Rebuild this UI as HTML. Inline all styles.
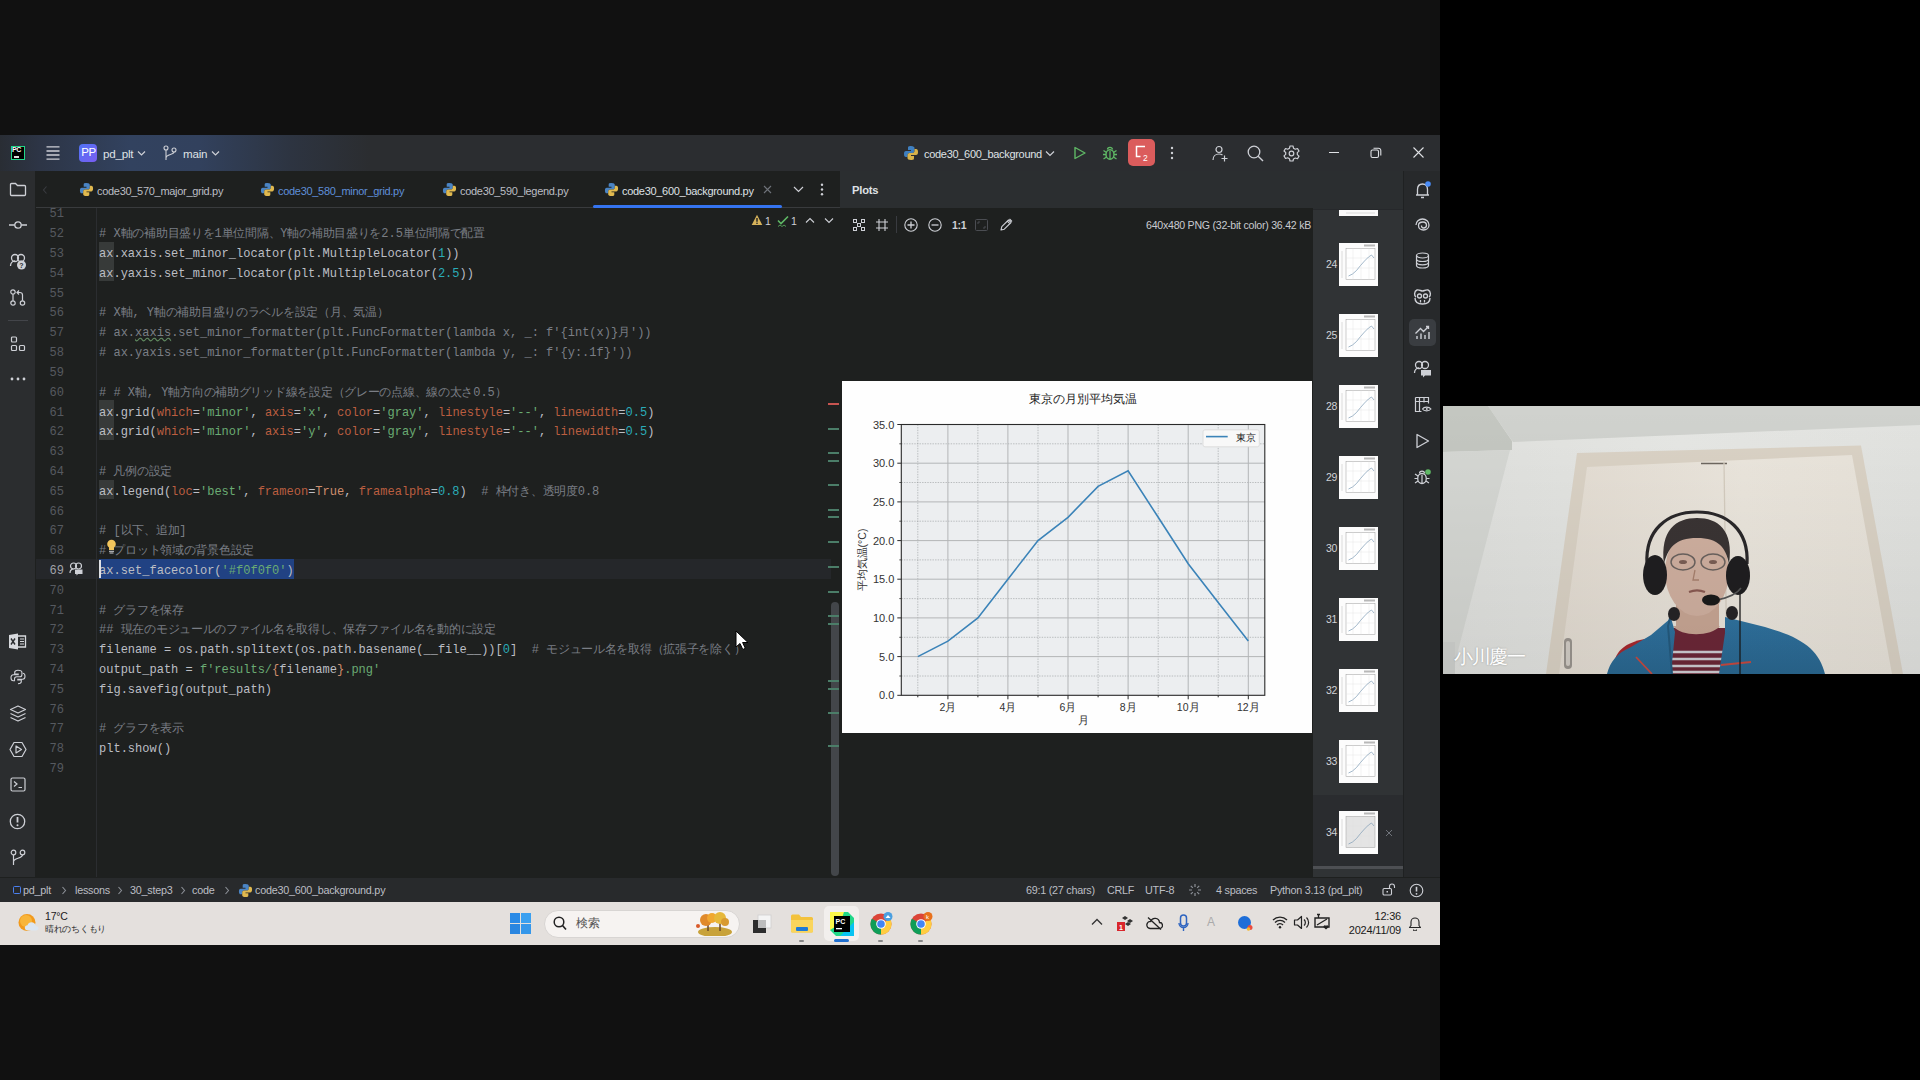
<!DOCTYPE html>
<html><head><meta charset="utf-8">
<style>
*{margin:0;padding:0;box-sizing:border-box}
html,body{width:1920px;height:1080px;overflow:hidden;background:#000;font-family:"Liberation Sans",sans-serif}
.a{position:absolute}
#top{left:0;top:0;width:1440px;height:135px;background:#111}
#bot{left:0;top:945px;width:1440px;height:135px;background:#111}
#title{left:0;top:135px;width:1440px;height:36px;background:linear-gradient(90deg,#292d34 0px,#2d3546 40px,#32425f 130px,#32415d 200px,#2d3441 290px,#2b2d30 370px,#2b2d30 100%)}
#lstrip{left:0;top:171px;width:36px;height:706px;background:#2b2d2f;border-right:1px solid #1e201f}
#tabs{left:36px;top:171px;width:804px;height:37px;background:#1e201f;border-bottom:1px solid #393b3d}
#editor{left:36px;top:208px;width:804px;height:669px;background:#1e201f;overflow:hidden}
#plotshdr{left:840px;top:171px;width:473px;height:37px;background:#2b2e30}
#plotsbody{left:840px;top:208px;width:473px;height:669px;background:#1e201f}
#thumbs{left:1313px;top:171px;width:90px;height:706px;background:#303335;overflow:hidden}
#rstrip{left:1403px;top:171px;width:37px;height:706px;background:#27292b;border-left:1px solid #1f2122}
#status{left:0;top:877px;width:1440px;height:25px;background:#282a2c;border-top:1px solid #1e201f}
#taskbar{left:0;top:902px;width:1440px;height:43px;background:#e4e0dd}
#cam{left:1443px;top:406px;width:477px;height:268px;background:#c9cbc6;overflow:hidden}
.ln{position:absolute;left:0;width:28px;text-align:right;font-family:"Liberation Mono",monospace;font-size:12.03px;line-height:19.81px;color:#565a60}
.cl{position:absolute;left:63px;white-space:pre;font-family:"Liberation Mono",monospace;font-size:12.03px;line-height:19.81px;color:#bcbec4}
.j{font-size:12px;letter-spacing:-0.28px}
.axh{background:#373a39}
.sel{background:#214283;display:inline-block;height:19.81px;vertical-align:top}
.tt{top:13.5px;font-size:11px;letter-spacing:-0.3px}
.st{top:5.5px;font-size:10.8px;color:#bcbec4;letter-spacing:-0.25px}
.ui{font-family:"Liberation Sans",sans-serif;white-space:nowrap}
</style></head><body>
<div id="top" class="a"></div>
<div id="bot" class="a"></div>
<div id="title" class="a">
  <!-- PC logo -->
  <div class="a" style="left:11px;top:11px;width:14px;height:14px;background:#000;border:1px solid #21d789"></div>
  <div class="a ui" style="left:12px;top:11px;font-size:7px;font-weight:bold;color:#fff;letter-spacing:-0.5px">PC</div>
  <div class="a" style="left:14px;top:21px;width:5px;height:1.5px;background:#ddd"></div>
  <!-- hamburger -->
  <svg class="a" style="left:45px;top:10px" width="16" height="16" viewBox="0 0 16 16"><path d="M1.5 1.8h13M1.5 6h13M1.5 10h13M1.5 14.2h13" stroke="#ced0d6" stroke-width="1.3"/></svg>
  <!-- PP badge -->
  <div class="a" style="left:79px;top:9px;width:18px;height:18px;border-radius:4px;background:linear-gradient(135deg,#4f73f5,#7a5df2)"></div>
  <div class="a ui" style="left:80px;top:11px;width:17px;text-align:center;font-size:11.5px;color:#fff;letter-spacing:-0.3px">PP</div>
  <div class="a ui" style="left:103px;top:12px;font-size:11.6px;letter-spacing:-0.2px;color:#dfe1e5">pd_plt</div>
  <svg class="a" style="left:137px;top:15px" width="9" height="7" viewBox="0 0 9 7"><path d="M1 1.5l3.5 3.5 3.5-3.5" stroke="#ced0d6" stroke-width="1.2" fill="none"/></svg>
  <!-- branch -->
  <svg class="a" style="left:163px;top:10px" width="14" height="16" viewBox="0 0 14 16"><circle cx="3" cy="3" r="2" stroke="#ced0d6" stroke-width="1.1" fill="none"/><circle cx="11" cy="5" r="2" stroke="#ced0d6" stroke-width="1.1" fill="none"/><path d="M3 5v10M11 7c0 3-8 2-8 6" stroke="#ced0d6" stroke-width="1.1" fill="none"/></svg>
  <div class="a ui" style="left:183px;top:12px;font-size:11.6px;letter-spacing:-0.2px;color:#dfe1e5">main</div>
  <svg class="a" style="left:211px;top:15px" width="9" height="7" viewBox="0 0 9 7"><path d="M1 1.5l3.5 3.5 3.5-3.5" stroke="#ced0d6" stroke-width="1.2" fill="none"/></svg>
  <!-- run config -->
  <svg class="a" style="left:903px;top:10px" width="16" height="16" viewBox="0 0 16 16"><path d="M8 1c-3 0-3 1-3 2v2h3v1H3c-1.5 0-2 1-2 3s.5 3 2 3h1.5V10c0-1 1-2 2-2h3c1 0 2-1 2-2V3c0-1-1-2-3.5-2z" fill="#3f7fbf"/><path d="M8 15c3 0 3-1 3-2v-2H8v-1h5c1.5 0 2-1 2-3s-.5-3-2-3h-1.5V6c0 1-1 2-2 2h-3c-1 0-2 1-2 2v3c0 1 1 2 3.5 2z" fill="#d9b34a"/></svg>
  <div class="a ui" style="left:924px;top:13px;font-size:11px;letter-spacing:-0.3px;color:#dfe1e5">code30_600_background</div>
  <svg class="a" style="left:1045px;top:15px" width="10" height="7" viewBox="0 0 10 7"><path d="M1 1.5l4 4 4-4" stroke="#ced0d6" stroke-width="1.2" fill="none"/></svg>
  <svg class="a" style="left:1073px;top:11px" width="14" height="14" viewBox="0 0 14 14"><path d="M2 1.5v11l10-5.5z" stroke="#5fb865" stroke-width="1.4" fill="none" stroke-linejoin="round"/></svg>
  <svg class="a" style="left:1102px;top:10px" width="16" height="16" viewBox="0 0 16 16"><ellipse cx="8" cy="9.5" rx="4" ry="4.8" stroke="#5fb865" stroke-width="1.4" fill="none"/><path d="M5.5 4.5a2.5 2.2 0 015 0M1 9.5h3M12 9.5h3M1.5 5.5l3 2M14.5 5.5l-3 2M1.5 14l3-2M14.5 14l-3-2M8 6v8" stroke="#5fb865" stroke-width="1.3" fill="none"/></svg>
  <div class="a" style="left:1128px;top:4px;width:27px;height:27px;border-radius:5px;background:#db5c5c"></div>
  <svg class="a" style="left:1133px;top:9px" width="18" height="18" viewBox="0 0 18 18"><path d="M12 2.5H3.5v10h4" stroke="#fff" stroke-width="1.5" fill="none"/><text x="10" y="17" font-size="8.5" fill="#fff" font-family="Liberation Sans">2</text></svg>
  <svg class="a" style="left:1170px;top:11px" width="4" height="14" viewBox="0 0 4 14"><circle cx="2" cy="2" r="1.2" fill="#ced0d6"/><circle cx="2" cy="7" r="1.2" fill="#ced0d6"/><circle cx="2" cy="12" r="1.2" fill="#ced0d6"/></svg>
  <svg class="a" style="left:1212px;top:10px" width="17" height="17" viewBox="0 0 17 17"><circle cx="7" cy="4.5" r="3" stroke="#ced0d6" stroke-width="1.2" fill="none"/><path d="M1 15c0-3.5 2.5-6 6-6 1.5 0 2.5.3 3.5 1M12.5 10.5v6M9.5 13.5h6" stroke="#ced0d6" stroke-width="1.2" fill="none"/></svg>
  <svg class="a" style="left:1247px;top:10px" width="17" height="17" viewBox="0 0 17 17"><circle cx="7" cy="7" r="5.8" stroke="#ced0d6" stroke-width="1.3" fill="none"/><path d="M11.2 11.2l4.8 4.8" stroke="#ced0d6" stroke-width="1.4"/></svg>
  <svg class="a" style="left:1283px;top:10px" width="17" height="17" viewBox="0 0 17 17"><path d="M7 1h3l.5 2.2 1.8 1 2.2-.7 1.5 2.6-1.7 1.5v2l1.7 1.5-1.5 2.6-2.2-.7-1.8 1L10 16H7l-.5-2.2-1.8-1-2.2.7L1 10.9l1.7-1.5v-2L1 6.1l1.5-2.6 2.2.7 1.8-1z" stroke="#ced0d6" stroke-width="1.2" fill="none" stroke-linejoin="round"/><circle cx="8.5" cy="8.5" r="2.3" stroke="#ced0d6" stroke-width="1.2" fill="none"/></svg>
  <div class="a" style="left:1329px;top:17px;width:10px;height:1.2px;background:#dfe1e5"></div>
  <svg class="a" style="left:1370px;top:12px" width="12" height="12" viewBox="0 0 12 12"><rect x="1" y="3" width="7.5" height="7.5" rx="1.5" stroke="#dfe1e5" stroke-width="1.1" fill="none"/><path d="M3.5 1.2h5a2.3 2.3 0 012.3 2.3v5" stroke="#dfe1e5" stroke-width="1.1" fill="none"/></svg>
  <svg class="a" style="left:1413px;top:12px" width="11" height="11" viewBox="0 0 11 11"><path d="M.5.5l10 10M10.5.5l-10 10" stroke="#dfe1e5" stroke-width="1.1"/></svg>
</div>

<div id="lstrip" class="a">
  <svg class="a" style="left:9px;top:11px" width="18" height="15" viewBox="0 0 18 15"><path d="M1.5 2.5a1 1 0 011-1h4l2 2h7a1 1 0 011 1v8a1 1 0 01-1 1h-13a1 1 0 01-1-1z" stroke="#ced0d6" stroke-width="1.3" fill="none"/></svg>
  <svg class="a" style="left:8px;top:48px" width="20" height="12" viewBox="0 0 20 12"><circle cx="10" cy="6" r="3.2" stroke="#ced0d6" stroke-width="1.3" fill="none"/><path d="M1 6h5.8M13.2 6H19" stroke="#ced0d6" stroke-width="1.3"/></svg>
  <svg class="a" style="left:9px;top:82px" width="18" height="17" viewBox="0 0 18 17"><circle cx="6" cy="5" r="3.5" stroke="#ced0d6" stroke-width="1.3" fill="none"/><circle cx="12" cy="5" r="3.5" stroke="#ced0d6" stroke-width="1.3" fill="none"/><path d="M1.5 13c0-3 2-5 4.5-5" stroke="#ced0d6" stroke-width="1.3" fill="none"/><circle cx="12.5" cy="12" r="4.5" fill="#ced0d6"/><text x="10.3" y="15" font-size="7" font-weight="bold" fill="#2b2d30" font-family="Liberation Sans">?</text></svg>
  <svg class="a" style="left:9px;top:118px" width="18" height="17" viewBox="0 0 18 17"><circle cx="4" cy="3" r="2.2" stroke="#ced0d6" stroke-width="1.2" fill="none"/><circle cx="4" cy="14" r="2.2" stroke="#ced0d6" stroke-width="1.2" fill="none"/><circle cx="13.5" cy="14" r="2.2" stroke="#ced0d6" stroke-width="1.2" fill="none"/><path d="M4 5.2v6.6M13.5 11.8V6c0-1.5-1-2.5-2.5-2.5H8M10 1.5L8 3.5l2 2" stroke="#ced0d6" stroke-width="1.2" fill="none"/></svg>
  <div class="a" style="left:8px;top:149px;width:20px;height:1px;background:#43454a"></div>
  <svg class="a" style="left:10px;top:165px" width="16" height="16" viewBox="0 0 16 16"><rect x="1.5" y="1" width="5" height="5" rx="1" stroke="#ced0d6" stroke-width="1.2" fill="none"/><rect x="1.5" y="9.5" width="5" height="5" rx="1" stroke="#ced0d6" stroke-width="1.2" fill="none"/><rect x="9.5" y="9.5" width="5" height="5" rx="1" stroke="#ced0d6" stroke-width="1.2" fill="none"/></svg>
  <svg class="a" style="left:9px;top:205px" width="18" height="6" viewBox="0 0 18 6"><circle cx="3" cy="3" r="1.4" fill="#ced0d6"/><circle cx="9" cy="3" r="1.4" fill="#ced0d6"/><circle cx="15" cy="3" r="1.4" fill="#ced0d6"/></svg>

  <svg class="a" style="left:8px;top:462px" width="19" height="17" viewBox="0 0 19 17"><path d="M1 2l9-1.5v16L1 15z" fill="#d7d9dd"/><path d="M10 3h7.5v11H10" stroke="#d7d9dd" stroke-width="1.3" fill="none"/><path d="M12 6h4M12 8.5h4M12 11h4" stroke="#d7d9dd" stroke-width="1"/><path d="M3 5.5l4 6M7 5.5l-4 6" stroke="#2b2d30" stroke-width="1.4"/></svg>
  <svg class="a" style="left:10px;top:498px" width="16" height="16" viewBox="0 0 16 16"><path d="M8 1.2c-3 0-3.3 1.2-3.3 2.2V5h3.5v.8H3.3C1.8 5.8 1 7 1 8.8s.8 3 2.3 3h1.2v-1.8c0-1.2 1-2.2 2.2-2.2h3.2c1 0 2-1 2-2V3.4c0-1.1-1-2.2-3.9-2.2z" stroke="#ced0d6" stroke-width="1.1" fill="none"/><path d="M8 14.8c3 0 3.3-1.2 3.3-2.2V11H7.8v-.8h4.9c1.5 0 2.3-1.2 2.3-3s-.8-3-2.3-3" stroke="#ced0d6" stroke-width="1.1" fill="none"/></svg>
  <svg class="a" style="left:9px;top:534px" width="18" height="17" viewBox="0 0 18 17"><path d="M9 1L1.5 4.5 9 8l7.5-3.5z" stroke="#ced0d6" stroke-width="1.2" fill="none" stroke-linejoin="round"/><path d="M1.5 8.5L9 12l7.5-3.5M1.5 12.5L9 16l7.5-3.5" stroke="#ced0d6" stroke-width="1.2" fill="none" stroke-linejoin="round"/></svg>
  <svg class="a" style="left:9px;top:570px" width="18" height="17" viewBox="0 0 18 17"><path d="M5 1.5h8l4 7-4 7H5l-4-7z" stroke="#ced0d6" stroke-width="1.2" fill="none" stroke-linejoin="round"/><path d="M7 5v7l5.5-3.5z" stroke="#ced0d6" stroke-width="1.2" fill="none" stroke-linejoin="round"/></svg>
  <svg class="a" style="left:10px;top:606px" width="16" height="15" viewBox="0 0 16 15"><rect x="1" y="1" width="14" height="13" rx="1.5" stroke="#ced0d6" stroke-width="1.2" fill="none"/><path d="M4 4.5l3 2.5-3 2.5M8.5 10.5H12" stroke="#ced0d6" stroke-width="1.2" fill="none"/></svg>
  <svg class="a" style="left:9px;top:642px" width="17" height="17" viewBox="0 0 17 17"><circle cx="8.5" cy="8.5" r="7.2" stroke="#ced0d6" stroke-width="1.3" fill="none"/><path d="M8.5 4v5.5" stroke="#ced0d6" stroke-width="1.8"/><circle cx="8.5" cy="12.3" r="1" fill="#ced0d6"/></svg>
  <svg class="a" style="left:10px;top:678px" width="16" height="17" viewBox="0 0 16 17"><circle cx="3.5" cy="3.5" r="2.3" stroke="#ced0d6" stroke-width="1.2" fill="none"/><circle cx="12.5" cy="3.5" r="2.3" stroke="#ced0d6" stroke-width="1.2" fill="none"/><path d="M3.5 5.8V16M12.5 5.8c0 4-9 3-9 7" stroke="#ced0d6" stroke-width="1.2" fill="none"/></svg>
</div>

<div id="tabs" class="a">
  <svg class="a" style="left:6px;top:14px" width="6" height="10" viewBox="0 0 6 10"><path d="M4.5 1.5L1.5 5l3 3.5" stroke="#3a3c40" stroke-width="1.1" fill="none"/></svg>
  <svg class="a" style="left:43px;top:11px" width="15" height="15" viewBox="0 0 16 16"><path d="M8 1c-3 0-3 1-3 2v2h3v1H3c-1.5 0-2 1-2 3s.5 3 2 3h1.5V10c0-1 1-2 2-2h3c1 0 2-1 2-2V3c0-1-1-2-3.5-2z" fill="#4a84c4"/><path d="M8 15c3 0 3-1 3-2v-2H8v-1h5c1.5 0 2-1 2-3s-.5-3-2-3h-1.5V6c0 1-1 2-2 2h-3c-1 0-2 1-2 2v3c0 1 1 2 3.5 2z" fill="#e0b94f"/></svg><div class="a ui tt" style="left:61px;color:#bcbec4">code30_570_major_grid.py</div>
  <svg class="a" style="left:224px;top:11px" width="15" height="15" viewBox="0 0 16 16"><path d="M8 1c-3 0-3 1-3 2v2h3v1H3c-1.5 0-2 1-2 3s.5 3 2 3h1.5V10c0-1 1-2 2-2h3c1 0 2-1 2-2V3c0-1-1-2-3.5-2z" fill="#4a84c4"/><path d="M8 15c3 0 3-1 3-2v-2H8v-1h5c1.5 0 2-1 2-3s-.5-3-2-3h-1.5V6c0 1-1 2-2 2h-3c-1 0-2 1-2 2v3c0 1 1 2 3.5 2z" fill="#e0b94f"/></svg><div class="a ui tt" style="left:242px;color:#5e8fd9">code30_580_minor_grid.py</div>
  <svg class="a" style="left:406px;top:11px" width="15" height="15" viewBox="0 0 16 16"><path d="M8 1c-3 0-3 1-3 2v2h3v1H3c-1.5 0-2 1-2 3s.5 3 2 3h1.5V10c0-1 1-2 2-2h3c1 0 2-1 2-2V3c0-1-1-2-3.5-2z" fill="#4a84c4"/><path d="M8 15c3 0 3-1 3-2v-2H8v-1h5c1.5 0 2-1 2-3s-.5-3-2-3h-1.5V6c0 1-1 2-2 2h-3c-1 0-2 1-2 2v3c0 1 1 2 3.5 2z" fill="#e0b94f"/></svg><div class="a ui tt" style="left:424px;color:#bcbec4">code30_590_legend.py</div>
  <svg class="a" style="left:568px;top:11px" width="15" height="15" viewBox="0 0 16 16"><path d="M8 1c-3 0-3 1-3 2v2h3v1H3c-1.5 0-2 1-2 3s.5 3 2 3h1.5V10c0-1 1-2 2-2h3c1 0 2-1 2-2V3c0-1-1-2-3.5-2z" fill="#4a84c4"/><path d="M8 15c3 0 3-1 3-2v-2H8v-1h5c1.5 0 2-1 2-3s-.5-3-2-3h-1.5V6c0 1-1 2-2 2h-3c-1 0-2 1-2 2v3c0 1 1 2 3.5 2z" fill="#e0b94f"/></svg><div class="a ui tt" style="left:586px;color:#dfe1e5">code30_600_background.py</div>
  <svg class="a" style="left:727px;top:14px" width="9" height="9" viewBox="0 0 9 9"><path d="M1 1l7 7M8 1L1 8" stroke="#6f737a" stroke-width="1.1"/></svg>
  <div class="a" style="left:557px;top:34px;width:189px;height:3px;border-radius:2px;background:#3574f0"></div>
  <svg class="a" style="left:757px;top:15px" width="11" height="7" viewBox="0 0 11 7"><path d="M1 1l4.5 4.5L10 1" stroke="#ced0d6" stroke-width="1.2" fill="none"/></svg>
  <svg class="a" style="left:784px;top:12px" width="4" height="13" viewBox="0 0 4 13"><circle cx="2" cy="1.8" r="1.2" fill="#ced0d6"/><circle cx="2" cy="6.5" r="1.2" fill="#ced0d6"/><circle cx="2" cy="11.2" r="1.2" fill="#ced0d6"/></svg>
</div>

<div id="editor" class="a">
  <div class="a" style="left:0;top:351px;width:795px;height:20px;background:#25272a"></div>
  <div class="a" style="left:60px;top:0;width:1px;height:669px;background:#2b2d30"></div>
<div class="a" style="left:63px;top:271.54px;width:14.5px;height:19.81px;background:#373a39"></div>
<div class="a" style="left:63px;top:192.30px;width:14.5px;height:39.62px;background:#373a39"></div>
<div class="a" style="left:63px;top:33.82px;width:14.5px;height:39.62px;background:#373a39"></div>
<div class="a" style="left:63px;top:350.75px;width:194.9px;height:19.81px;background:#214283"></div>
<div class="ln" style="top:-2.60px">51</div><div class="cl" style="top:-2.60px"></div>
<div class="ln" style="top:17.21px">52</div><div class="cl" style="top:17.21px"><span style="color:#7a7e85"># X<span class="j">軸の補助目盛りを</span>1<span class="j">単位間隔、</span>Y<span class="j">軸の補助目盛りを</span>2.5<span class="j">単位間隔で配置</span></span></div>
<div class="ln" style="top:37.02px">53</div><div class="cl" style="top:37.02px">ax.xaxis.set_minor_locator(plt.MultipleLocator(<span style="color:#2aacb8">1</span>))</div>
<div class="ln" style="top:56.83px">54</div><div class="cl" style="top:56.83px">ax.yaxis.set_minor_locator(plt.MultipleLocator(<span style="color:#2aacb8">2.5</span>))</div>
<div class="ln" style="top:76.64px">55</div><div class="cl" style="top:76.64px"></div>
<div class="ln" style="top:96.45px">56</div><div class="cl" style="top:96.45px"><span style="color:#7a7e85"># X<span class="j">軸</span>, Y<span class="j">軸の補助目盛りのラベルを設定（月、気温）</span></span></div>
<div class="ln" style="top:116.26px">57</div><div class="cl" style="top:116.26px"><span style="color:#7a7e85"># ax.</span><span style="color:#7a7e85;text-decoration:underline wavy #5f8a5f">xaxis</span><span style="color:#7a7e85">.set_minor_formatter(plt.FuncFormatter(lambda x, _: f&#x27;{int(x)}<span class="j">月</span>&#x27;))</span></div>
<div class="ln" style="top:136.07px">58</div><div class="cl" style="top:136.07px"><span style="color:#7a7e85"># ax.yaxis.set_minor_formatter(plt.FuncFormatter(lambda y, _: f&#x27;{y:.1f}&#x27;))</span></div>
<div class="ln" style="top:155.88px">59</div><div class="cl" style="top:155.88px"></div>
<div class="ln" style="top:175.69px">60</div><div class="cl" style="top:175.69px"><span style="color:#7a7e85"># # X<span class="j">軸</span>, Y<span class="j">軸方向の補助グリッド線を設定（グレーの点線、線の太さ</span>0.5<span class="j">）</span></span></div>
<div class="ln" style="top:195.50px">61</div><div class="cl" style="top:195.50px">ax.grid(<span style="color:#bb5e40">which</span>=<span style="color:#6aab73">&#x27;minor&#x27;</span>, <span style="color:#bb5e40">axis</span>=<span style="color:#6aab73">&#x27;x&#x27;</span>, <span style="color:#bb5e40">color</span>=<span style="color:#6aab73">&#x27;gray&#x27;</span>, <span style="color:#bb5e40">linestyle</span>=<span style="color:#6aab73">&#x27;--&#x27;</span>, <span style="color:#bb5e40">linewidth</span>=<span style="color:#2aacb8">0.5</span>)</div>
<div class="ln" style="top:215.31px">62</div><div class="cl" style="top:215.31px">ax.grid(<span style="color:#bb5e40">which</span>=<span style="color:#6aab73">&#x27;minor&#x27;</span>, <span style="color:#bb5e40">axis</span>=<span style="color:#6aab73">&#x27;y&#x27;</span>, <span style="color:#bb5e40">color</span>=<span style="color:#6aab73">&#x27;gray&#x27;</span>, <span style="color:#bb5e40">linestyle</span>=<span style="color:#6aab73">&#x27;--&#x27;</span>, <span style="color:#bb5e40">linewidth</span>=<span style="color:#2aacb8">0.5</span>)</div>
<div class="ln" style="top:235.12px">63</div><div class="cl" style="top:235.12px"></div>
<div class="ln" style="top:254.93px">64</div><div class="cl" style="top:254.93px"><span style="color:#7a7e85"># <span class="j">凡例の設定</span></span></div>
<div class="ln" style="top:274.74px">65</div><div class="cl" style="top:274.74px">ax.legend(<span style="color:#bb5e40">loc</span>=<span style="color:#6aab73">&#x27;best&#x27;</span>, <span style="color:#bb5e40">frameon</span>=<span style="color:#cf8e6d">True</span>, <span style="color:#bb5e40">framealpha</span>=<span style="color:#2aacb8">0.8</span>)  <span style="color:#7a7e85"># <span class="j">枠付き、透明度</span>0.8</span></div>
<div class="ln" style="top:294.55px">66</div><div class="cl" style="top:294.55px"></div>
<div class="ln" style="top:314.36px">67</div><div class="cl" style="top:314.36px"><span style="color:#7a7e85"># [<span class="j">以下、追加</span>]</span></div>
<div class="ln" style="top:334.17px">68</div><div class="cl" style="top:334.17px"><span style="color:#7a7e85"># <span class="j">プロット領域の背景色設定</span></span></div>
<div class="ln" style="top:353.98px;color:#a1a3ab">69</div><div class="cl" style="top:353.98px">ax.set_facecolor(<span style="color:#6aab73">&#x27;#f0f0f0&#x27;</span>)</div>
<div class="ln" style="top:373.79px">70</div><div class="cl" style="top:373.79px"></div>
<div class="ln" style="top:393.60px">71</div><div class="cl" style="top:393.60px"><span style="color:#7a7e85"># <span class="j">グラフを保存</span></span></div>
<div class="ln" style="top:413.41px">72</div><div class="cl" style="top:413.41px"><span style="color:#7a7e85">## <span class="j">現在のモジュールのファイル名を取得し、保存ファイル名を動的に設定</span></span></div>
<div class="ln" style="top:433.22px">73</div><div class="cl" style="top:433.22px">filename = os.path.splitext(os.path.basename(__file__))[<span style="color:#2aacb8">0</span>]  <span style="color:#7a7e85"># <span class="j">モジュール名を取得（拡張子を除く）</span></span></div>
<div class="ln" style="top:453.03px">74</div><div class="cl" style="top:453.03px">output_path = <span style="color:#6aab73">f&#x27;results/</span><span style="color:#cf8e6d">{</span>filename<span style="color:#cf8e6d">}</span><span style="color:#6aab73">.png&#x27;</span></div>
<div class="ln" style="top:472.84px">75</div><div class="cl" style="top:472.84px">fig.savefig(output_path)</div>
<div class="ln" style="top:492.65px">76</div><div class="cl" style="top:492.65px"></div>
<div class="ln" style="top:512.46px">77</div><div class="cl" style="top:512.46px"><span style="color:#7a7e85"># <span class="j">グラフを表示</span></span></div>
<div class="ln" style="top:532.27px">78</div><div class="cl" style="top:532.27px">plt.show()</div>
<div class="ln" style="top:552.08px">79</div><div class="cl" style="top:552.08px"></div>
</div>
<div id="plotshdr" class="a"><div class="a ui" style="left:12px;top:13px;font-size:11.2px;font-weight:bold;color:#dfe1e5;letter-spacing:-0.2px">Plots</div></div>
<div id="plotsbody" class="a">
  <svg class="a" style="left:13px;top:11px" width="12" height="12" viewBox="0 0 12 12"><g stroke="#ced0d6" stroke-width="1" fill="none"><rect x=".5" y=".5" width="3" height="3"/><rect x="8.5" y=".5" width="3" height="3"/><rect x=".5" y="8.5" width="3" height="3"/><rect x="8.5" y="8.5" width="3" height="3"/><rect x="4.5" y="4.5" width="3" height="3"/></g></svg>
  <svg class="a" style="left:36px;top:11px" width="12" height="12" viewBox="0 0 12 12"><path d="M3 0v12M9 0v12M0 3h12M0 9h12" stroke="#ced0d6" stroke-width="1.1"/></svg>
  <div class="a" style="left:56px;top:8px;width:1px;height:17px;background:#393b40"></div>
  <svg class="a" style="left:64px;top:10px" width="14" height="14" viewBox="0 0 14 14"><circle cx="7" cy="7" r="6.2" stroke="#ced0d6" stroke-width="1.1" fill="none"/><path d="M7 3.5v7M3.5 7h7" stroke="#ced0d6" stroke-width="1.3"/></svg>
  <svg class="a" style="left:88px;top:10px" width="14" height="14" viewBox="0 0 14 14"><circle cx="7" cy="7" r="6.2" stroke="#ced0d6" stroke-width="1.1" fill="none"/><path d="M3.5 7h7" stroke="#ced0d6" stroke-width="1.3"/></svg>
  <div class="a ui" style="left:112px;top:11px;font-size:10.5px;font-weight:bold;color:#ced0d6;letter-spacing:-0.3px">1:1</div>
  <svg class="a" style="left:135px;top:11px" width="13" height="12" viewBox="0 0 13 12"><rect x=".5" y=".5" width="12" height="11" rx="1" stroke="#4b4d52" stroke-width="1" fill="none"/><path d="M3 5V3h2M10 7v2H8" stroke="#4b4d52" stroke-width="1" fill="none"/></svg>
  <svg class="a" style="left:160px;top:10px" width="13" height="13" viewBox="0 0 13 13"><path d="M1 12l.8-3.3L8.5 2l2.5 2.5-6.7 6.7zM7.3 3.2l2.5 2.5M9.5 1l2.5 2.5" stroke="#ced0d6" stroke-width="1.1" fill="none" stroke-linejoin="round"/></svg>
  <div class="a ui" style="left:303px;top:11px;width:168px;text-align:right;font-size:10.6px;color:#c9cbd0;letter-spacing:-0.25px">640x480 PNG (32-bit color) 36.42 kB</div>
</div>
<svg class="a" style="left:842px;top:381px" width="470" height="352" viewBox="0 0 470 352">
<rect x="0" y="0" width="470" height="352" fill="#fefefe"/>
<rect x="59.3" y="43.5" width="363.5" height="270.8" fill="#eceef0"/>
<line x1="75.8" y1="43.5" x2="75.8" y2="314.3" stroke="#8f9295" stroke-width="0.55" stroke-dasharray="1.4,1.2"/>
<line x1="135.9" y1="43.5" x2="135.9" y2="314.3" stroke="#8f9295" stroke-width="0.55" stroke-dasharray="1.4,1.2"/>
<line x1="196.0" y1="43.5" x2="196.0" y2="314.3" stroke="#8f9295" stroke-width="0.55" stroke-dasharray="1.4,1.2"/>
<line x1="256.1" y1="43.5" x2="256.1" y2="314.3" stroke="#8f9295" stroke-width="0.55" stroke-dasharray="1.4,1.2"/>
<line x1="316.2" y1="43.5" x2="316.2" y2="314.3" stroke="#8f9295" stroke-width="0.55" stroke-dasharray="1.4,1.2"/>
<line x1="376.2" y1="43.5" x2="376.2" y2="314.3" stroke="#8f9295" stroke-width="0.55" stroke-dasharray="1.4,1.2"/>
<line x1="59.3" y1="295.0" x2="422.8" y2="295.0" stroke="#8f9295" stroke-width="0.55" stroke-dasharray="1.4,1.2"/>
<line x1="59.3" y1="256.3" x2="422.8" y2="256.3" stroke="#8f9295" stroke-width="0.55" stroke-dasharray="1.4,1.2"/>
<line x1="59.3" y1="217.6" x2="422.8" y2="217.6" stroke="#8f9295" stroke-width="0.55" stroke-dasharray="1.4,1.2"/>
<line x1="59.3" y1="178.9" x2="422.8" y2="178.9" stroke="#8f9295" stroke-width="0.55" stroke-dasharray="1.4,1.2"/>
<line x1="59.3" y1="140.2" x2="422.8" y2="140.2" stroke="#8f9295" stroke-width="0.55" stroke-dasharray="1.4,1.2"/>
<line x1="59.3" y1="101.5" x2="422.8" y2="101.5" stroke="#8f9295" stroke-width="0.55" stroke-dasharray="1.4,1.2"/>
<line x1="59.3" y1="62.8" x2="422.8" y2="62.8" stroke="#8f9295" stroke-width="0.55" stroke-dasharray="1.4,1.2"/>
<line x1="105.9" y1="43.5" x2="105.9" y2="314.3" stroke="#b3b5b7" stroke-width="1"/>
<line x1="165.9" y1="43.5" x2="165.9" y2="314.3" stroke="#b3b5b7" stroke-width="1"/>
<line x1="226.0" y1="43.5" x2="226.0" y2="314.3" stroke="#b3b5b7" stroke-width="1"/>
<line x1="286.1" y1="43.5" x2="286.1" y2="314.3" stroke="#b3b5b7" stroke-width="1"/>
<line x1="346.2" y1="43.5" x2="346.2" y2="314.3" stroke="#b3b5b7" stroke-width="1"/>
<line x1="406.3" y1="43.5" x2="406.3" y2="314.3" stroke="#b3b5b7" stroke-width="1"/>
<line x1="59.3" y1="275.6" x2="422.8" y2="275.6" stroke="#b3b5b7" stroke-width="1"/>
<line x1="59.3" y1="236.9" x2="422.8" y2="236.9" stroke="#b3b5b7" stroke-width="1"/>
<line x1="59.3" y1="198.2" x2="422.8" y2="198.2" stroke="#b3b5b7" stroke-width="1"/>
<line x1="59.3" y1="159.6" x2="422.8" y2="159.6" stroke="#b3b5b7" stroke-width="1"/>
<line x1="59.3" y1="120.9" x2="422.8" y2="120.9" stroke="#b3b5b7" stroke-width="1"/>
<line x1="59.3" y1="82.2" x2="422.8" y2="82.2" stroke="#b3b5b7" stroke-width="1"/>
<polyline points="75.8,275.6 105.9,260.1 135.9,236.9 165.9,198.2 196.0,159.6 226.0,136.3 256.1,105.4 286.1,89.9 316.2,136.3 346.2,182.8 376.2,221.5 406.3,260.1" fill="none" stroke="#3b83b8" stroke-width="1.6"/>
<rect x="59.3" y="43.5" width="363.5" height="270.8" fill="none" stroke="#2a2a2a" stroke-width="1.1"/>
<line x1="55.3" y1="314.3" x2="59.3" y2="314.3" stroke="#2a2a2a" stroke-width="1"/>
<text x="52.3" y="318.3" text-anchor="end" font-size="11" fill="#333" font-family="Liberation Sans">0.0</text>
<line x1="55.3" y1="275.6" x2="59.3" y2="275.6" stroke="#2a2a2a" stroke-width="1"/>
<text x="52.3" y="279.6" text-anchor="end" font-size="11" fill="#333" font-family="Liberation Sans">5.0</text>
<line x1="55.3" y1="236.9" x2="59.3" y2="236.9" stroke="#2a2a2a" stroke-width="1"/>
<text x="52.3" y="240.9" text-anchor="end" font-size="11" fill="#333" font-family="Liberation Sans">10.0</text>
<line x1="55.3" y1="198.2" x2="59.3" y2="198.2" stroke="#2a2a2a" stroke-width="1"/>
<text x="52.3" y="202.2" text-anchor="end" font-size="11" fill="#333" font-family="Liberation Sans">15.0</text>
<line x1="55.3" y1="159.6" x2="59.3" y2="159.6" stroke="#2a2a2a" stroke-width="1"/>
<text x="52.3" y="163.6" text-anchor="end" font-size="11" fill="#333" font-family="Liberation Sans">20.0</text>
<line x1="55.3" y1="120.9" x2="59.3" y2="120.9" stroke="#2a2a2a" stroke-width="1"/>
<text x="52.3" y="124.9" text-anchor="end" font-size="11" fill="#333" font-family="Liberation Sans">25.0</text>
<line x1="55.3" y1="82.2" x2="59.3" y2="82.2" stroke="#2a2a2a" stroke-width="1"/>
<text x="52.3" y="86.2" text-anchor="end" font-size="11" fill="#333" font-family="Liberation Sans">30.0</text>
<line x1="55.3" y1="43.5" x2="59.3" y2="43.5" stroke="#2a2a2a" stroke-width="1"/>
<text x="52.3" y="47.5" text-anchor="end" font-size="11" fill="#333" font-family="Liberation Sans">35.0</text>
<line x1="57.3" y1="295.0" x2="59.3" y2="295.0" stroke="#2a2a2a" stroke-width="0.8"/>
<line x1="57.3" y1="256.3" x2="59.3" y2="256.3" stroke="#2a2a2a" stroke-width="0.8"/>
<line x1="57.3" y1="217.6" x2="59.3" y2="217.6" stroke="#2a2a2a" stroke-width="0.8"/>
<line x1="57.3" y1="178.9" x2="59.3" y2="178.9" stroke="#2a2a2a" stroke-width="0.8"/>
<line x1="57.3" y1="140.2" x2="59.3" y2="140.2" stroke="#2a2a2a" stroke-width="0.8"/>
<line x1="57.3" y1="101.5" x2="59.3" y2="101.5" stroke="#2a2a2a" stroke-width="0.8"/>
<line x1="57.3" y1="62.8" x2="59.3" y2="62.8" stroke="#2a2a2a" stroke-width="0.8"/>
<line x1="75.8" y1="314.3" x2="75.8" y2="316.3" stroke="#2a2a2a" stroke-width="1"/>
<line x1="105.9" y1="314.3" x2="105.9" y2="318.3" stroke="#2a2a2a" stroke-width="1"/>
<text x="105.9" y="329.8" text-anchor="middle" font-size="10.5" fill="#333" font-family="Liberation Sans">2月</text>
<line x1="135.9" y1="314.3" x2="135.9" y2="316.3" stroke="#2a2a2a" stroke-width="1"/>
<line x1="165.9" y1="314.3" x2="165.9" y2="318.3" stroke="#2a2a2a" stroke-width="1"/>
<text x="165.9" y="329.8" text-anchor="middle" font-size="10.5" fill="#333" font-family="Liberation Sans">4月</text>
<line x1="196.0" y1="314.3" x2="196.0" y2="316.3" stroke="#2a2a2a" stroke-width="1"/>
<line x1="226.0" y1="314.3" x2="226.0" y2="318.3" stroke="#2a2a2a" stroke-width="1"/>
<text x="226.0" y="329.8" text-anchor="middle" font-size="10.5" fill="#333" font-family="Liberation Sans">6月</text>
<line x1="256.1" y1="314.3" x2="256.1" y2="316.3" stroke="#2a2a2a" stroke-width="1"/>
<line x1="286.1" y1="314.3" x2="286.1" y2="318.3" stroke="#2a2a2a" stroke-width="1"/>
<text x="286.1" y="329.8" text-anchor="middle" font-size="10.5" fill="#333" font-family="Liberation Sans">8月</text>
<line x1="316.2" y1="314.3" x2="316.2" y2="316.3" stroke="#2a2a2a" stroke-width="1"/>
<line x1="346.2" y1="314.3" x2="346.2" y2="318.3" stroke="#2a2a2a" stroke-width="1"/>
<text x="346.2" y="329.8" text-anchor="middle" font-size="10.5" fill="#333" font-family="Liberation Sans">10月</text>
<line x1="376.2" y1="314.3" x2="376.2" y2="316.3" stroke="#2a2a2a" stroke-width="1"/>
<line x1="406.3" y1="314.3" x2="406.3" y2="318.3" stroke="#2a2a2a" stroke-width="1"/>
<text x="406.3" y="329.8" text-anchor="middle" font-size="10.5" fill="#333" font-family="Liberation Sans">12月</text>
<text x="241" y="342.8" text-anchor="middle" font-size="10.5" fill="#333" font-family="Liberation Sans">月</text>
<text x="241" y="22" text-anchor="middle" font-size="12" fill="#222" font-family="Liberation Sans">東京の月別平均気温</text>
<text transform="translate(24,179) rotate(-90)" text-anchor="middle" font-size="10.5" fill="#333" font-family="Liberation Sans">平均気温(°C)</text>
<rect x="361" y="48.8" width="56.3" height="17" rx="2" fill="#f8f8f8" stroke="#d8d8d8" stroke-width="0.8"/>
<line x1="364" y1="55.6" x2="385.7" y2="55.6" stroke="#3b83b8" stroke-width="1.6"/>
<text x="393.5" y="59.5" font-size="10" fill="#222" font-family="Liberation Sans">東京</text>
</svg>

<div id="thumbs" class="a">
<div class="a" style="left:0;top:0;width:90px;height:38px;background:#2b2e30"></div>
<div class="a" style="left:0;top:38px;width:90px;height:1px;background:#26282b"></div>
<svg class="a" style="left:26px;top:38.5px" width="39" height="6" viewBox="0 0 39 6"><rect width="39" height="6" fill="#fafafa"/><path d="M7 3h29" stroke="#bbb" stroke-width="0.5"/></svg>
<div class="a ui" style="left:6px;top:87px;width:18px;text-align:right;font-size:10.5px;color:#d0d2d6;letter-spacing:-0.3px">24</div>
<svg class="a" style="left:26px;top:72px" width="39" height="43" viewBox="0 0 39 43"><rect width="39" height="43" fill="#fcfcfc"/><rect x="7" y="5.5" width="29" height="31" fill="#ffffff" stroke="#9a9a9a" stroke-width="0.5"/><path d="M7 15h29M7 25h29M14 5.5v31M22 5.5v31M30 5.5v31" stroke="#e0e0e0" stroke-width="0.4"/><path d="M9.5 33l4-2 4-3.5 4-5 4-4.5 4-4 3-2 2.5 3" stroke="#7d9bb5" stroke-width="0.7" fill="none"/><rect x="25" y="1.5" width="11" height="2" fill="#b8b8b8"/><path d="M3 8v27" stroke="#dcdcdc" stroke-width="1"/></svg>
<div class="a ui" style="left:6px;top:158px;width:18px;text-align:right;font-size:10.5px;color:#d0d2d6;letter-spacing:-0.3px">25</div>
<svg class="a" style="left:26px;top:143px" width="39" height="43" viewBox="0 0 39 43"><rect width="39" height="43" fill="#fcfcfc"/><rect x="7" y="5.5" width="29" height="31" fill="#ffffff" stroke="#9a9a9a" stroke-width="0.5"/><path d="M7 15h29M7 25h29M14 5.5v31M22 5.5v31M30 5.5v31" stroke="#e0e0e0" stroke-width="0.4"/><path d="M9.5 33l4-2 4-3.5 4-5 4-4.5 4-4 3-2 2.5 3" stroke="#7d9bb5" stroke-width="0.7" fill="none"/><rect x="25" y="1.5" width="11" height="2" fill="#b8b8b8"/><path d="M3 8v27" stroke="#dcdcdc" stroke-width="1"/></svg>
<div class="a ui" style="left:6px;top:229px;width:18px;text-align:right;font-size:10.5px;color:#d0d2d6;letter-spacing:-0.3px">28</div>
<svg class="a" style="left:26px;top:214px" width="39" height="43" viewBox="0 0 39 43"><rect width="39" height="43" fill="#fcfcfc"/><rect x="7" y="5.5" width="29" height="31" fill="#ffffff" stroke="#9a9a9a" stroke-width="0.5"/><path d="M7 15h29M7 25h29M14 5.5v31M22 5.5v31M30 5.5v31" stroke="#e0e0e0" stroke-width="0.4"/><path d="M9.5 33l4-2 4-3.5 4-5 4-4.5 4-4 3-2 2.5 3" stroke="#7d9bb5" stroke-width="0.7" fill="none"/><rect x="25" y="1.5" width="11" height="2" fill="#b8b8b8"/><path d="M3 8v27" stroke="#dcdcdc" stroke-width="1"/></svg>
<div class="a ui" style="left:6px;top:300px;width:18px;text-align:right;font-size:10.5px;color:#d0d2d6;letter-spacing:-0.3px">29</div>
<svg class="a" style="left:26px;top:285px" width="39" height="43" viewBox="0 0 39 43"><rect width="39" height="43" fill="#fcfcfc"/><rect x="7" y="5.5" width="29" height="31" fill="#ffffff" stroke="#9a9a9a" stroke-width="0.5"/><path d="M7 15h29M7 25h29M14 5.5v31M22 5.5v31M30 5.5v31" stroke="#e0e0e0" stroke-width="0.4"/><path d="M9.5 33l4-2 4-3.5 4-5 4-4.5 4-4 3-2 2.5 3" stroke="#7d9bb5" stroke-width="0.7" fill="none"/><rect x="25" y="1.5" width="11" height="2" fill="#b8b8b8"/><path d="M3 8v27" stroke="#dcdcdc" stroke-width="1"/></svg>
<div class="a ui" style="left:6px;top:371px;width:18px;text-align:right;font-size:10.5px;color:#d0d2d6;letter-spacing:-0.3px">30</div>
<svg class="a" style="left:26px;top:356px" width="39" height="43" viewBox="0 0 39 43"><rect width="39" height="43" fill="#fcfcfc"/><rect x="7" y="5.5" width="29" height="31" fill="#ffffff" stroke="#9a9a9a" stroke-width="0.5"/><path d="M7 15h29M7 25h29M14 5.5v31M22 5.5v31M30 5.5v31" stroke="#e0e0e0" stroke-width="0.4"/><path d="M9.5 33l4-2 4-3.5 4-5 4-4.5 4-4 3-2 2.5 3" stroke="#7d9bb5" stroke-width="0.7" fill="none"/><rect x="25" y="1.5" width="11" height="2" fill="#b8b8b8"/><path d="M3 8v27" stroke="#dcdcdc" stroke-width="1"/></svg>
<div class="a ui" style="left:6px;top:442px;width:18px;text-align:right;font-size:10.5px;color:#d0d2d6;letter-spacing:-0.3px">31</div>
<svg class="a" style="left:26px;top:427px" width="39" height="43" viewBox="0 0 39 43"><rect width="39" height="43" fill="#fcfcfc"/><rect x="7" y="5.5" width="29" height="31" fill="#ffffff" stroke="#9a9a9a" stroke-width="0.5"/><path d="M7 15h29M7 25h29M14 5.5v31M22 5.5v31M30 5.5v31" stroke="#e0e0e0" stroke-width="0.4"/><path d="M9.5 33l4-2 4-3.5 4-5 4-4.5 4-4 3-2 2.5 3" stroke="#7d9bb5" stroke-width="0.7" fill="none"/><rect x="25" y="1.5" width="11" height="2" fill="#b8b8b8"/><path d="M3 8v27" stroke="#dcdcdc" stroke-width="1"/></svg>
<div class="a ui" style="left:6px;top:513px;width:18px;text-align:right;font-size:10.5px;color:#d0d2d6;letter-spacing:-0.3px">32</div>
<svg class="a" style="left:26px;top:498px" width="39" height="43" viewBox="0 0 39 43"><rect width="39" height="43" fill="#fcfcfc"/><rect x="7" y="5.5" width="29" height="31" fill="#ffffff" stroke="#9a9a9a" stroke-width="0.5"/><path d="M7 15h29M7 25h29M14 5.5v31M22 5.5v31M30 5.5v31" stroke="#e0e0e0" stroke-width="0.4"/><path d="M9.5 33l4-2 4-3.5 4-5 4-4.5 4-4 3-2 2.5 3" stroke="#7d9bb5" stroke-width="0.7" fill="none"/><rect x="25" y="1.5" width="11" height="2" fill="#b8b8b8"/><path d="M3 8v27" stroke="#dcdcdc" stroke-width="1"/></svg>
<div class="a ui" style="left:6px;top:584px;width:18px;text-align:right;font-size:10.5px;color:#d0d2d6;letter-spacing:-0.3px">33</div>
<svg class="a" style="left:26px;top:569px" width="39" height="43" viewBox="0 0 39 43"><rect width="39" height="43" fill="#fcfcfc"/><rect x="7" y="5.5" width="29" height="31" fill="#ffffff" stroke="#9a9a9a" stroke-width="0.5"/><path d="M7 15h29M7 25h29M14 5.5v31M22 5.5v31M30 5.5v31" stroke="#e0e0e0" stroke-width="0.4"/><path d="M9.5 33l4-2 4-3.5 4-5 4-4.5 4-4 3-2 2.5 3" stroke="#7d9bb5" stroke-width="0.7" fill="none"/><rect x="25" y="1.5" width="11" height="2" fill="#b8b8b8"/><path d="M3 8v27" stroke="#dcdcdc" stroke-width="1"/></svg>
<div class="a" style="left:0;top:624px;width:90px;height:72px;background:#2a2c2f"></div>
<div class="a ui" style="left:6px;top:655px;width:18px;text-align:right;font-size:10.5px;color:#d0d2d6;letter-spacing:-0.3px">34</div>
<svg class="a" style="left:26px;top:640px" width="39" height="43" viewBox="0 0 39 43"><rect width="39" height="43" fill="#fcfcfc"/><rect x="7" y="5.5" width="29" height="31" fill="#e4e4e4" stroke="#9a9a9a" stroke-width="0.5"/><path d="M7 15h29M7 25h29M14 5.5v31M22 5.5v31M30 5.5v31" stroke="#e0e0e0" stroke-width="0.4"/><path d="M9.5 33l4-2 4-3.5 4-5 4-4.5 4-4 3-2 2.5 3" stroke="#7d9bb5" stroke-width="0.7" fill="none"/><rect x="25" y="1.5" width="11" height="2" fill="#b8b8b8"/><path d="M3 8v27" stroke="#dcdcdc" stroke-width="1"/></svg>
<svg class="a" style="left:72px;top:658px" width="8" height="8" viewBox="0 0 8 8"><path d="M1 1l6 6M7 1L1 7" stroke="#6f737a" stroke-width="1"/></svg>
<div class="a" style="left:0;top:695px;width:90px;height:3px;background:#4d4f53"></div>
</div>
<div id="rstrip" class="a">
  <svg class="a" style="left:9px;top:9px" width="20" height="20" viewBox="0 0 20 20"><path d="M3 15h13M4.5 15V9.5C4.5 6 6.5 4 9.5 4S14.5 6 14.5 9.5V15M8 17.5h3" stroke="#ced0d6" stroke-width="1.3" fill="none"/><circle cx="15" cy="4" r="2.8" fill="#4a8cf7"/></svg>
  <svg class="a" style="left:10px;top:46px" width="17" height="15" viewBox="0 0 17 15"><path d="M2 8a6.5 6 0 0113 0c0 3-2.5 5-5.5 5S4.5 11 4.5 8.5 6.5 5 9 5s3.5 1.5 3.5 3.3S11 11 9.5 11 7.5 10 7.5 8.5" stroke="#ced0d6" stroke-width="1.3" fill="none"/></svg>
  <svg class="a" style="left:11px;top:81px" width="15" height="17" viewBox="0 0 15 17"><ellipse cx="7.5" cy="3.5" rx="6" ry="2.5" stroke="#ced0d6" stroke-width="1.2" fill="none"/><path d="M1.5 3.5v10c0 1.4 2.7 2.5 6 2.5s6-1.1 6-2.5v-10M1.5 7c0 1.4 2.7 2.5 6 2.5s6-1.1 6-2.5M1.5 10.3c0 1.4 2.7 2.5 6 2.5s6-1.1 6-2.5" stroke="#ced0d6" stroke-width="1.2" fill="none"/></svg>
  <svg class="a" style="left:9px;top:117px" width="19" height="17" viewBox="0 0 19 17"><path d="M3 9c-2-1-2-6 1-7 2-.5 4 1 5.5 1S13 1.5 15 2c3 1 3 6 1 7M2 10c0 4 3 6 7.5 6S17 14 17 10" stroke="#ced0d6" stroke-width="1.4" fill="none"/><circle cx="6.5" cy="8" r="2" stroke="#ced0d6" stroke-width="1.3" fill="none"/><circle cx="12.5" cy="8" r="2" stroke="#ced0d6" stroke-width="1.3" fill="none"/><path d="M7.5 12v2.5M11.5 12v2.5" stroke="#ced0d6" stroke-width="1.3"/></svg>
  <div class="a" style="left:5px;top:148px;width:27px;height:27px;border-radius:5px;background:#3a3d41"></div>
  <svg class="a" style="left:10px;top:153px" width="16" height="16" viewBox="0 0 16 16"><path d="M1.5 9.5l5-5 3 3 5-5M12 2.5h2.5V5" stroke="#ced0d6" stroke-width="1.3" fill="none"/><path d="M3 15v-3M7 15V9.5M11 15v-4M15 15V8" stroke="#ced0d6" stroke-width="1.4"/></svg>
  <svg class="a" style="left:9px;top:189px" width="19" height="18" viewBox="0 0 19 18"><circle cx="6" cy="5" r="3.5" stroke="#ced0d6" stroke-width="1.3" fill="none"/><circle cx="12" cy="5" r="3.5" stroke="#ced0d6" stroke-width="1.3" fill="none"/><path d="M1.5 13c0-3 2-5 4.5-5" stroke="#ced0d6" stroke-width="1.3" fill="none"/><path d="M8 10h10v5.5h-6l-2 2v-2H8z" fill="#ced0d6"/></svg>
  <svg class="a" style="left:10px;top:225px" width="18" height="18" viewBox="0 0 18 18"><path d="M1.5 1.5h13v6M1.5 1.5v14h6M1.5 5.5h13M5.5 1.5v14M10 1.5v5" stroke="#ced0d6" stroke-width="1.2" fill="none"/><path d="M8.5 13c1.5-2.5 6.5-2.5 8.5 0-2 2.5-7 2.5-8.5 0z" stroke="#ced0d6" stroke-width="1.1" fill="none"/><circle cx="12.8" cy="13" r="1" fill="#ced0d6"/></svg>
  <svg class="a" style="left:11px;top:262px" width="15" height="16" viewBox="0 0 15 16"><path d="M2 1.5v13l11.5-6.5z" stroke="#ced0d6" stroke-width="1.3" fill="none" stroke-linejoin="round"/></svg>
  <svg class="a" style="left:9px;top:297px" width="19" height="18" viewBox="0 0 19 18"><ellipse cx="9" cy="10.5" rx="4.3" ry="5" stroke="#ced0d6" stroke-width="1.3" fill="none"/><path d="M6.5 5.5a2.5 2.3 0 015 0M1.5 10.5h3M13.5 10.5h3M2 6l3 2M2 15l3-2M16 15l-3-2M9 7v8" stroke="#ced0d6" stroke-width="1.2" fill="none"/><circle cx="15" cy="4" r="2.8" fill="#5fb865"/></svg>
</div>

<div id="status" class="a">
  <div class="a" style="left:13px;top:8px;width:8px;height:8px;border:1.3px solid #4a7ff0;border-radius:1.5px"></div>
  <div class="a ui st" style="left:23px">pd_plt</div>
  <svg class="a" style="left:61px;top:8px" width="6" height="9" viewBox="0 0 6 9"><path d="M1.5 1l3 3.5-3 3.5" stroke="#8c9097" stroke-width="1.1" fill="none"/></svg>
  <div class="a ui st" style="left:75px">lessons</div>
  <svg class="a" style="left:117px;top:8px" width="6" height="9" viewBox="0 0 6 9"><path d="M1.5 1l3 3.5-3 3.5" stroke="#8c9097" stroke-width="1.1" fill="none"/></svg>
  <div class="a ui st" style="left:130px">30_step3</div>
  <svg class="a" style="left:180px;top:8px" width="6" height="9" viewBox="0 0 6 9"><path d="M1.5 1l3 3.5-3 3.5" stroke="#8c9097" stroke-width="1.1" fill="none"/></svg>
  <div class="a ui st" style="left:192px">code</div>
  <svg class="a" style="left:224px;top:8px" width="6" height="9" viewBox="0 0 6 9"><path d="M1.5 1l3 3.5-3 3.5" stroke="#8c9097" stroke-width="1.1" fill="none"/></svg>
  <svg class="a" style="left:238px;top:5px" width="15" height="15" viewBox="0 0 16 16"><path d="M8 1c-3 0-3 1-3 2v2h3v1H3c-1.5 0-2 1-2 3s.5 3 2 3h1.5V10c0-1 1-2 2-2h3c1 0 2-1 2-2V3c0-1-1-2-3.5-2z" fill="#4a84c4"/><path d="M8 15c3 0 3-1 3-2v-2H8v-1h5c1.5 0 2-1 2-3s-.5-3-2-3h-1.5V6c0 1-1 2-2 2h-3c-1 0-2 1-2 2v3c0 1 1 2 3.5 2z" fill="#e0b94f"/></svg>
  <div class="a ui st" style="left:255px">code30_600_background.py</div>
  <div class="a ui st" style="left:1026px">69:1 (27 chars)</div>
  <div class="a ui st" style="left:1107px">CRLF</div>
  <div class="a ui st" style="left:1145px">UTF-8</div>
  <svg class="a" style="left:1188px;top:5px" width="14" height="14" viewBox="0 0 14 14"><g stroke="#8c9097" stroke-width="1.2"><path d="M7 1v3M7 10v3M1 7h3M10 7h3M2.8 2.8l2 2M9.2 9.2l2 2M2.8 11.2l2-2M9.2 4.8l2-2"/></g></svg>
  <div class="a ui st" style="left:1216px">4 spaces</div>
  <div class="a ui st" style="left:1270px">Python 3.13 (pd_plt)</div>
  <svg class="a" style="left:1382px;top:5px" width="14" height="13" viewBox="0 0 14 13"><rect x="1" y="5.5" width="8.5" height="6.5" rx="1.2" stroke="#ced0d6" stroke-width="1.1" fill="none"/><path d="M7.5 5.5V3.5a2.5 2.5 0 015 0V5" stroke="#ced0d6" stroke-width="1.1" fill="none"/><rect x="4.5" y="8" width="1.5" height="1.5" fill="#ced0d6"/></svg>
  <svg class="a" style="left:1409px;top:5px" width="15" height="15" viewBox="0 0 15 15"><circle cx="7.5" cy="7.5" r="6.3" stroke="#ced0d6" stroke-width="1.1" fill="none"/><path d="M7.5 3.8v4.7" stroke="#ced0d6" stroke-width="1.6"/><circle cx="7.5" cy="10.8" r=".9" fill="#ced0d6"/></svg>
</div>

<div id="taskbar" class="a">
  <svg class="a" style="left:17px;top:10px" width="24" height="22" viewBox="0 0 24 22"><circle cx="10" cy="10.5" r="8.5" fill="#f29a1c"/><circle cx="9" cy="9" r="6" fill="#f8b53a"/><path d="M11 18.5c-2 0-3.2-1.2-3.2-2.7 0-1.4 1.2-2.5 2.7-2.5.5-1.8 2.2-3 4-3 2.2 0 4 1.6 4.2 3.6 1.6.1 2.8 1.2 2.8 2.4 0 1.3-1.2 2.2-2.7 2.2z" fill="#dbe6f2"/></svg>
  <div class="a ui" style="left:45px;top:8px;font-size:10.5px;color:#1a1a1a;letter-spacing:-0.2px">17°C</div>
  <div class="a ui" style="left:45px;top:21px;font-size:9px;color:#333;letter-spacing:-0.3px">晴れのちくもり</div>
  <svg class="a" style="left:510px;top:10.5px" width="21" height="21" viewBox="0 0 21 21"><rect x="0" y="0" width="10" height="10" fill="#2a8ae6"/><rect x="11" y="0" width="10" height="10" fill="#3aa0f0"/><rect x="0" y="11" width="10" height="10" fill="#2a86e0"/><rect x="11" y="11" width="10" height="10" fill="#3597ea"/></svg>
  <div class="a" style="left:544px;top:7.5px;width:196px;height:28px;border-radius:14px;background:#f6f3f1;border:1px solid #d8d5d3"></div>
  <svg class="a" style="left:553px;top:14px" width="14" height="15" viewBox="0 0 14 15"><circle cx="6" cy="6" r="4.8" stroke="#222" stroke-width="1.5" fill="none"/><path d="M9.5 9.5l3.5 4" stroke="#222" stroke-width="1.7"/></svg>
  <div class="a ui" style="left:576px;top:14px;font-size:11.5px;color:#555">検索</div>
  <svg class="a" style="left:693px;top:10px" width="40" height="24" viewBox="0 0 40 24"><ellipse cx="22" cy="20" rx="17" ry="5" fill="#c8a23a"/><path d="M15 19V9M27 19V8" stroke="#6b4a2a" stroke-width="1.5"/><circle cx="13" cy="8" r="6" fill="#e08a2a"/><circle cx="19" cy="6" r="5" fill="#f0a830"/><circle cx="27" cy="6" r="6" fill="#e6b83a"/><circle cx="32" cy="10" r="4" fill="#d89a30"/><circle cx="5" cy="14" r="2" fill="#d85a2a"/></svg>
  <svg class="a" style="left:751px;top:11px" width="22" height="21" viewBox="0 0 22 21"><rect x="7" y="2" width="13" height="13" fill="#f4f4f4" stroke="#cfcfcf" stroke-width=".8"/><rect x="2" y="7" width="13" height="13" fill="#2d2d2d"/><rect x="7" y="7" width="8" height="8" fill="#bdbdbd"/></svg>
  <svg class="a" style="left:790px;top:11px" width="24" height="21" viewBox="0 0 24 21"><path d="M1 3a1.5 1.5 0 011.5-1.5h6.5l2 2.5h10.5A1.5 1.5 0 0123 5.5V18a1.5 1.5 0 01-1.5 1.5h-19A1.5 1.5 0 011 18z" fill="#f3c23c"/><path d="M1 7h22v11a1.5 1.5 0 01-1.5 1.5h-19A1.5 1.5 0 011 18z" fill="#fad55c"/><rect x="6" y="14" width="12" height="4" rx="1" fill="#1f7ad6"/></svg>
  <div class="a" style="left:824px;top:4px;width:35px;height:35px;border-radius:5px;background:#f2efed"></div>
  <svg class="a" style="left:830px;top:10px" width="24" height="24" viewBox="0 0 24 24"><path d="M0 0h18l6 6v18H6L0 18z" fill="#21d789"/><path d="M0 0h14l-4 12L0 18z" fill="#fcf84a"/><path d="M10 24h14V10z" fill="#07c3f2"/><rect x="4" y="4" width="16" height="16" fill="#000"/><text x="5.5" y="12" font-size="7" font-weight="bold" fill="#fff" font-family="Liberation Sans">PC</text><rect x="6" y="16" width="6" height="1.3" fill="#fff"/></svg>
  <div class="a" style="left:834px;top:37px;width:15px;height:3px;border-radius:2px;background:#1f6fd0"></div>
  <svg class="a" style="left:869px;top:10px" width="24" height="24" viewBox="0 0 24 24"><circle cx="12" cy="12" r="10.5" fill="#db4437"/><path d="M12 12L2.9 6.75A10.5 10.5 0 0012 22.5z" fill="#0f9d58"/><path d="M12 12l9.1-5.25A10.5 10.5 0 0112 22.5z" fill="#ffcd40"/><circle cx="12" cy="12" r="4.8" fill="#fff"/><circle cx="12" cy="12" r="3.8" fill="#4285f4"/><circle cx="19" cy="4.5" r="4.5" fill="#4a9fe0"/><path d="M16.5 6l2.5-3 2.5 3z" fill="#fff"/></svg>
  <svg class="a" style="left:909px;top:10px" width="24" height="24" viewBox="0 0 24 24"><circle cx="12" cy="12" r="10.5" fill="#db4437"/><path d="M12 12L2.9 6.75A10.5 10.5 0 0012 22.5z" fill="#0f9d58"/><path d="M12 12l9.1-5.25A10.5 10.5 0 0112 22.5z" fill="#ffcd40"/><circle cx="12" cy="12" r="4.8" fill="#fff"/><circle cx="12" cy="12" r="3.8" fill="#4285f4"/><circle cx="19" cy="4.5" r="4.5" fill="#e8711c"/><text x="17" y="7.2" font-size="6" fill="#fff" font-family="Liberation Sans">k</text></svg>
  <div class="a" style="left:799px;top:38px;width:5px;height:2px;border-radius:1px;background:#888"></div>
  <div class="a" style="left:878px;top:38px;width:5px;height:2px;border-radius:1px;background:#888"></div>
  <div class="a" style="left:918px;top:38px;width:5px;height:2px;border-radius:1px;background:#888"></div>
  <svg class="a" style="left:1091px;top:16px" width="12" height="8" viewBox="0 0 12 8"><path d="M1 6.5l5-5 5 5" stroke="#333" stroke-width="1.3" fill="none"/></svg>
  <svg class="a" style="left:1117px;top:13px" width="16" height="17" viewBox="0 0 16 17"><path d="M5 3l3-2 3 2-3 2zM10 6l3-2 3 2-3 2zM8 9l3-2 3 2-3 2z" fill="#333"/><rect x="0" y="7" width="8" height="9" fill="#d9262c"/><text x="2" y="14.5" font-size="7" font-weight="bold" fill="#fff" font-family="Liberation Sans">1</text></svg>
  <svg class="a" style="left:1146px;top:14px" width="17" height="15" viewBox="0 0 17 15"><path d="M4 12.5h9.5a3 3 0 000-6 4.5 4.5 0 00-8.8-1A3.5 3.5 0 004 12.5z" stroke="#222" stroke-width="1.3" fill="none"/><path d="M2 1.5l13 12" stroke="#222" stroke-width="1.3"/></svg>
  <svg class="a" style="left:1178px;top:12px" width="11" height="19" viewBox="0 0 11 19"><rect x="2.5" y="1" width="6" height="11" rx="3" stroke="#2e64c0" stroke-width="1.5" fill="none"/><path d="M1 9a4.5 4.5 0 009 0M5.5 13.5V17" stroke="#2e64c0" stroke-width="1.4" fill="none"/></svg>
  <div class="a ui" style="left:1207px;top:13px;font-size:12px;color:#aaa">A</div>
  <svg class="a" style="left:1237px;top:13px" width="17" height="17" viewBox="0 0 17 17"><circle cx="7.5" cy="7.5" r="6.5" fill="#1e6ed8"/><circle cx="13" cy="12.5" r="2.5" fill="#e94a3f"/><circle cx="11.5" cy="14" r="1.8" fill="#f5b82e"/></svg>
  <svg class="a" style="left:1272px;top:13px" width="16" height="14" viewBox="0 0 16 14"><path d="M1 5a10 10 0 0114 0M3 7.5a7 7 0 0110 0M5 10a4 4 0 016 0" stroke="#222" stroke-width="1.3" fill="none"/><circle cx="8" cy="12.3" r="1.2" fill="#222"/></svg>
  <svg class="a" style="left:1293px;top:13px" width="17" height="15" viewBox="0 0 17 15"><path d="M1.5 5h3l4-3.5v12L4.5 10h-3z" stroke="#222" stroke-width="1.2" fill="none" stroke-linejoin="round"/><path d="M11 4.5a4 4 0 010 6M13.5 2.5a7 7 0 010 10" stroke="#222" stroke-width="1.2" fill="none"/></svg>
  <svg class="a" style="left:1314px;top:11px" width="19" height="18" viewBox="0 0 19 18"><path d="M1 5h14v9H1z" stroke="#222" stroke-width="1.4" fill="none"/><path d="M3 1.5h3M4.5 1.5v3.5M3 12l10-6" stroke="#222" stroke-width="1.3"/><path d="M12 16.5l-2.5-2.3a1.5 1.5 0 012.5-1.5 1.5 1.5 0 012.5 1.5z" fill="#222"/></svg>
  <div class="a ui" style="left:1343px;top:7.5px;width:58px;text-align:right;font-size:11px;color:#1a1a1a;letter-spacing:-0.2px">12:36</div>
  <div class="a ui" style="left:1336px;top:21.5px;width:65px;text-align:right;font-size:11px;color:#1a1a1a;letter-spacing:-0.2px">2024/11/09</div>
  <svg class="a" style="left:1408px;top:13px" width="14" height="16" viewBox="0 0 14 16"><path d="M1.5 12.5h11l-1.5-2V7a4 4 0 00-8 0v3.5zM5.5 14.5a1.5 1.5 0 003 0" stroke="#222" stroke-width="1.1" fill="none" stroke-linejoin="round"/></svg>
</div>

<div id="cam" class="a">
<svg class="a" style="left:0;top:0" width="477" height="268" viewBox="0 0 477 268">
  <defs>
    <linearGradient id="wallg" x1="0" y1="0" x2="1" y2="0"><stop offset="0" stop-color="#e0e1de"/><stop offset="0.5" stop-color="#e6e7e4"/><stop offset="1" stop-color="#e2e3e0"/></linearGradient>
    <linearGradient id="doorg" x1="0" y1="0" x2="1" y2="0"><stop offset="0" stop-color="#e4ddd3"/><stop offset="0.55" stop-color="#ebe6dd"/><stop offset="1" stop-color="#e8e3da"/></linearGradient>
    <linearGradient id="vig" x1="0" y1="0" x2="0" y2="1"><stop offset="0" stop-color="#000" stop-opacity="0"/><stop offset="1" stop-color="#000" stop-opacity="0.07"/></linearGradient>
    <linearGradient id="jack" x1="0" y1="0" x2="0" y2="1"><stop offset="0" stop-color="#3073a0"/><stop offset="1" stop-color="#2a6790"/></linearGradient>
  </defs>
  <rect width="477" height="268" fill="url(#wallg)"/>
  <polygon points="45,0 477,0 477,19 70,36" fill="#d0d2ce"/>
  <polygon points="0,0 45,0 69,35 69,44 0,46" fill="#c4c7c1"/>
  <polygon points="0,46 67,44 9,268 0,268" fill="#d5d7d3"/>
  <polygon points="134,47 418,39.5 460,268 103,268" fill="#dad2c5"/>
  <polygon points="144,61 409,49 449,268 116,268" fill="url(#doorg)"/>
  <path d="M258 57.5h26" stroke="#6d675f" stroke-width="1.5"/>
  <path d="M281 55.5L284 268" stroke="#d4ccbf" stroke-width="1.3"/>
  <rect x="121" y="232" width="8" height="31" rx="4" fill="#9a958f"/>
  <rect x="123" y="235" width="4" height="25" rx="2" fill="#d2cdc6"/>
  <rect x="0" y="236" width="12" height="32" fill="#cfd1ce"/>
  <!-- chair -->
  <path d="M170 262c2-18 12-28 46-31l8 10-40 22z" fill="#a8292f"/>
  <!-- neck -->
  <rect x="233" y="190" width="43" height="38" fill="#c8a694"/>
  <!-- shirt -->
  <path d="M222 222h60v46h-60z" fill="#6c2737"/>
  <path d="M222 246h60M222 253h60M222 260h60M222 266h60" stroke="#cfcdd2" stroke-width="2.6"/>
  <path d="M230 220c8 11 38 11 47 0" fill="#c8a694"/>
  <!-- jacket -->
  <path d="M164 268c3-12 10-21 24-27l20-12 20-17 4 14-4 42z" fill="url(#jack)"/>
  <path d="M382 268c-6-24-22-36-60-47l-40-10 0 16 -6 41z" fill="url(#jack)"/>
  <path d="M227 212l-2 8 4 48" stroke="#245a7e" stroke-width="2" fill="none"/>
  <path d="M193 251l16 17M278 259l30-3" stroke="#c8493f" stroke-width="1.8" fill="none"/>
  <!-- headrest -->
  <ellipse cx="231" cy="208" rx="6" ry="7" fill="#262426"/>
  <ellipse cx="289" cy="207" rx="6" ry="7" fill="#262426"/>
  <!-- head -->
  <ellipse cx="254" cy="166" rx="32" ry="44" fill="#d0b0a0"/>
  <path d="M221 158c-4-34 12-46 33-46s37 12 32 46c-3-16-10-26-32-26s-29 10-33 26z" fill="#3a3434"/>
  <ellipse cx="240" cy="156" rx="12" ry="8" stroke="#6a625e" stroke-width="1.4" fill="none"/>
  <ellipse cx="270" cy="156" rx="12" ry="8" stroke="#6a625e" stroke-width="1.4" fill="none"/>
  <ellipse cx="240" cy="156" rx="4" ry="2" fill="#7a5f55"/>
  <ellipse cx="270" cy="156" rx="4" ry="2" fill="#7a5f55"/>
  <path d="M252 164l-2 10h6" stroke="#a8806e" stroke-width="1.3" fill="none"/>
  <path d="M246 186c5-2 11-2 16 0" stroke="#8a5a52" stroke-width="2.2" fill="none"/>
  <!-- headphones -->
  <path d="M204 158c-2-34 20-52 50-52s52 18 50 52" stroke="#2a282a" stroke-width="3.2" fill="none"/>
  <ellipse cx="212" cy="169" rx="12" ry="20" fill="#1f1e20"/>
  <ellipse cx="295" cy="169.5" rx="12" ry="19.5" fill="#1f1e20"/>
  <path d="M298 182c-4 6-14 10-24 12" stroke="#555" stroke-width="1.5" fill="none"/>
  <ellipse cx="268" cy="194" rx="9" ry="5.5" fill="#1a1a1a"/>
  <path d="M297 188v80" stroke="#1a1a1a" stroke-width="1.3"/>
  <rect width="477" height="268" fill="url(#vig)"/>
</svg>
<div class="a" style="left:11px;top:238px;font-size:19px;color:#fff;font-family:'Liberation Sans',sans-serif;text-shadow:0 0 2px rgba(0,0,0,.3);letter-spacing:-1.5px">小川慶一</div>
</div>

<!-- inspection widget -->
<svg class="a" style="left:751px;top:214px" width="12" height="12" viewBox="0 0 12 12"><path d="M6 .8L11.3 11H.7z" fill="#d6b25a"/><path d="M6 4v3.8" stroke="#1e1f22" stroke-width="1.4"/><circle cx="6" cy="9.3" r=".8" fill="#1e1f22"/></svg>
<div class="a ui" style="left:765px;top:215px;font-size:10.5px;color:#ced0d6">1</div>
<svg class="a" style="left:777px;top:215px" width="12" height="13" viewBox="0 0 12 13"><path d="M1 5.5l3 3 7-7" stroke="#5fb865" stroke-width="1.6" fill="none"/><path d="M1 11.5l2-1.5 2 1.5 2-1.5 2 1.5" stroke="#5fb865" stroke-width=".8" fill="none"/></svg>
<div class="a ui" style="left:791px;top:215px;font-size:10.5px;color:#ced0d6">1</div>
<svg class="a" style="left:805px;top:217px" width="10" height="7" viewBox="0 0 10 7"><path d="M1 5.5l4-4 4 4" stroke="#ced0d6" stroke-width="1.1" fill="none"/></svg>
<svg class="a" style="left:824px;top:217px" width="10" height="7" viewBox="0 0 10 7"><path d="M1 1.5l4 4 4-4" stroke="#ced0d6" stroke-width="1.1" fill="none"/></svg>
<!-- scrollbar + stripes -->
<div class="a" style="left:831px;top:602px;width:8px;height:274px;border-radius:4px;background:#43464a"></div>
<div class="a" style="left:828px;top:403px;width:11px;height:2px;background:#c75450"></div>
<div class="a" style="left:828px;top:427.50px;width:11px;height:2px;background:#4b7d68"></div>
<div class="a" style="left:828px;top:451.75px;width:11px;height:2px;background:#4b7d68"></div>
<div class="a" style="left:828px;top:460.00px;width:11px;height:2px;background:#4b7d68"></div>
<div class="a" style="left:828px;top:484.25px;width:11px;height:2px;background:#4b7d68"></div>
<div class="a" style="left:828px;top:508.50px;width:11px;height:2px;background:#4b7d68"></div>
<div class="a" style="left:828px;top:516.25px;width:11px;height:2px;background:#4b7d68"></div>
<div class="a" style="left:828px;top:541.00px;width:11px;height:2px;background:#4b7d68"></div>
<div class="a" style="left:828px;top:566.00px;width:11px;height:2px;background:#4b7d68"></div>
<div class="a" style="left:828px;top:590.50px;width:11px;height:2px;background:#4b7d68"></div>
<div class="a" style="left:828px;top:614.75px;width:11px;height:2px;background:#4b7d68"></div>
<div class="a" style="left:828px;top:622.50px;width:11px;height:2px;background:#4b7d68"></div>
<div class="a" style="left:828px;top:679.75px;width:11px;height:2px;background:#4b7d68"></div>
<div class="a" style="left:828px;top:687.50px;width:11px;height:2px;background:#4b7d68"></div>
<div class="a" style="left:828px;top:712.25px;width:11px;height:2px;background:#4b7d68"></div>
<div class="a" style="left:828px;top:745.00px;width:11px;height:2px;background:#4b7d68"></div>
<!-- lightbulb -->
<svg class="a" style="left:106px;top:539px" width="11" height="15" viewBox="0 0 11 15"><circle cx="5.5" cy="5" r="4.3" fill="#f2c55c"/><rect x="3" y="8" width="5" height="3" fill="#f2c55c"/><path d="M3 12.3h5M3.5 14h4" stroke="#ced0d6" stroke-width="1"/></svg>
<!-- gutter icon line 69 -->
<svg class="a" style="left:69px;top:562px" width="14" height="14" viewBox="0 0 14 14"><circle cx="4.5" cy="4" r="3" stroke="#ced0d6" stroke-width="1.2" fill="none"/><circle cx="9.5" cy="4" r="3" stroke="#ced0d6" stroke-width="1.2" fill="none"/><path d="M1 11c0-2.5 1.5-4 3.5-4" stroke="#ced0d6" stroke-width="1.2" fill="none"/><path d="M6 7.5h7.5v4.5H9l-1.5 1.5V12H6z" fill="#ced0d6"/></svg>
<!-- caret -->
<div class="a" style="left:98.5px;top:560px;width:2px;height:17.5px;background:#dfe1e5"></div>
<!-- mouse cursor -->
<svg class="a" style="left:735px;top:630px" width="14" height="21" viewBox="0 0 14 21"><path d="M1 1v16l4-3.5 2.8 6 2.5-1.2-2.7-5.8H13z" fill="#fff" stroke="#000" stroke-width="1"/></svg>

</body></html>
